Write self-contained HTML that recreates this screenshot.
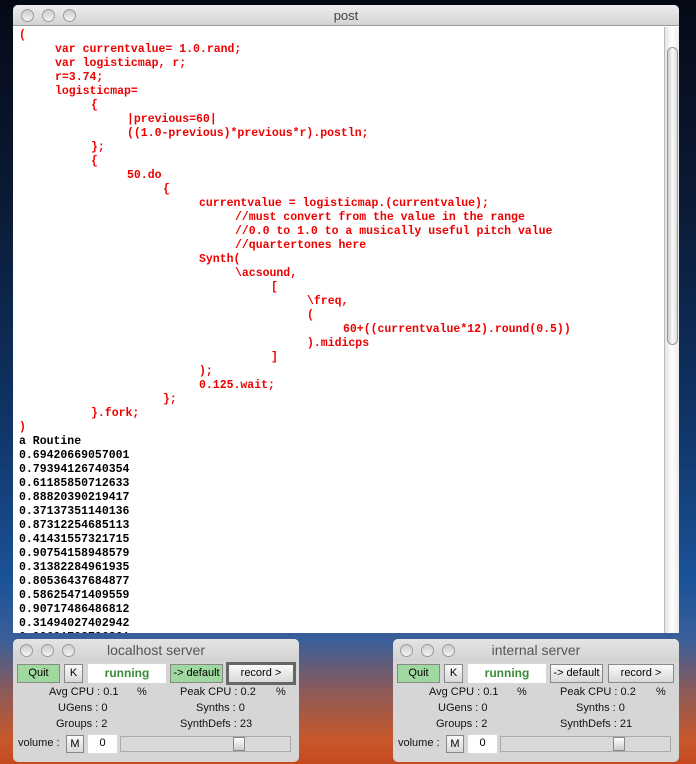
<!DOCTYPE html>
<html><head><style>
*{margin:0;padding:0;box-sizing:border-box}
body{width:696px;height:764px;overflow:hidden;position:relative;font-family:"Liberation Sans",sans-serif;
background:linear-gradient(180deg,#060a16 0px,#0b1a35 200px,#0f3466 420px,#1b5298 580px,#3a5f9a 640px,#8a5a5a 690px,#c8582a 740px,#c44a20 764px)}
.win{position:absolute;background:#fff;border-radius:5px 5px 0 0;overflow:hidden}
.tb{position:absolute;left:0;top:0;right:0;height:21px;background:linear-gradient(#eee,#d3d3d3);border-bottom:1px solid #999;text-align:center;font-size:13px;color:#444;line-height:21px}
.dot{position:absolute;top:4px;width:13px;height:13px;border-radius:50%;background:linear-gradient(#ccc,#f4f4f4);border:1px solid #9a9a9a}
.code{position:absolute;left:6px;top:24px;font-family:"Liberation Mono",monospace;font-weight:bold;font-size:11.5px;line-height:14px;color:#e00;white-space:pre;tab-size:36px;-moz-tab-size:36px}
.code div{height:14px}
.k{color:#000}
.sb{position:absolute;left:651px;top:22px;width:15px;height:606px;background:linear-gradient(90deg,#e4e4e4,#fff,#eaeaea);border-left:1px solid #bbb}
.thumb{position:absolute;left:2px;top:20px;width:11px;height:298px;border-radius:6px;background:linear-gradient(90deg,#ccc,#fafafa 50%,#ddd);border:1px solid #999}
.srv{position:absolute;top:639px;width:286px;height:123px;background:#d6d6d6;border-radius:5px;overflow:hidden;font-size:11px;color:#000}
.srv .tb{height:22px;border-bottom:none;background:linear-gradient(#e4e4e4,#d2d2d2);font-size:14px;color:#555;line-height:22px}
.b{position:absolute;height:19px;border:1px solid #888;background:linear-gradient(#fafafa,#d8d8d8);font-size:11px;text-align:center;line-height:17px}
.g{background:#9fd9a0}
.lb{position:absolute;font-size:11px;color:#111;white-space:nowrap}
</style></head><body>
<div class="win" style="left:13px;top:5px;width:666px;height:628px">
<div class="tb">post<span class="dot" style="left:8px"></span><span class="dot" style="left:29px"></span><span class="dot" style="left:50px"></span></div>
<div class="code"><div>(</div><div>	var currentvalue= 1.0.rand;</div><div>	var logisticmap, r;</div><div>	r=3.74;</div><div>	logisticmap=</div><div>		{</div><div>			|previous=60|</div><div>			((1.0-previous)*previous*r).postln;</div><div>		};</div><div>		{</div><div>			50.do</div><div>				{</div><div>					currentvalue = logisticmap.(currentvalue);</div><div>						//must convert from the value in the range</div><div>						//0.0 to 1.0 to a musically useful pitch value</div><div>						//quartertones here</div><div>					Synth(</div><div>						\acsound,</div><div>							[</div><div>								\freq,</div><div>								(</div><div>									60+((currentvalue*12).round(0.5))</div><div>								).midicps</div><div>							]</div><div>					);</div><div>					0.125.wait;</div><div>				};</div><div>		}.fork;</div><div>)</div><div class="k">a Routine</div><div class="k">0.69420669057001</div><div class="k">0.79394126740354</div><div class="k">0.61185850712633</div><div class="k">0.88820390219417</div><div class="k">0.37137351140136</div><div class="k">0.87312254685113</div><div class="k">0.41431557321715</div><div class="k">0.90754158948579</div><div class="k">0.31382284961935</div><div class="k">0.80536437684877</div><div class="k">0.58625471409559</div><div class="k">0.90717486486812</div><div class="k">0.31494027402942</div><div class="k">0.99691793796861</div></div>
<div class="sb"><div class="thumb"></div></div>
</div>

<div class="srv" style="left:13px">
<div class="tb">localhost server<span class="dot" style="left:7px;top:5px"></span><span class="dot" style="left:28px;top:5px"></span><span class="dot" style="left:49px;top:5px"></span></div>
<div class="b g" style="left:4px;top:25px;width:43px">Quit</div>
<div class="b" style="left:51px;top:25px;width:19px">K</div>
<div style="position:absolute;left:75px;top:25px;width:78px;height:19px;background:#fff;color:#3a8a3a;font-weight:bold;font-size:12px;text-align:center;line-height:19px">running</div>
<div class="b g" style="left:157px;top:25px;width:53px">-&gt; default</div>
<div class="b" style="left:213px;top:23px;width:70px;height:23px;border:3px solid #666;line-height:17px">record &gt;</div>
<div class="lb" style="left:36px;top:47px">Avg CPU : 0.1</div><div class="lb" style="left:124px;top:47px">%</div>
<div class="lb" style="left:167px;top:47px">Peak CPU : 0.2</div><div class="lb" style="left:263px;top:47px">%</div>
<div class="lb" style="left:45px;top:63px">UGens : 0</div><div class="lb" style="left:183px;top:63px">Synths : 0</div>
<div class="lb" style="left:43px;top:79px">Groups : 2</div><div class="lb" style="left:167px;top:79px">SynthDefs : 23</div>
<div class="lb" style="left:5px;top:98px">volume :</div>
<div class="b" style="left:53px;top:96px;width:18px;height:18px;line-height:16px">M</div>
<div style="position:absolute;left:75px;top:96px;width:29px;height:18px;background:#fff;text-align:center;line-height:16px">0</div>
<div style="position:absolute;left:107px;top:97px;width:171px;height:16px;border:1px solid #aaa;background:#d9d9d9"></div>
<div style="position:absolute;left:220px;top:98px;width:12px;height:14px;border:1px solid #888;background:linear-gradient(#fff,#ccc)"></div>
</div>

<div class="srv" style="left:393px">
<div class="tb">internal server<span class="dot" style="left:7px;top:5px"></span><span class="dot" style="left:28px;top:5px"></span><span class="dot" style="left:49px;top:5px"></span></div>
<div class="b g" style="left:4px;top:25px;width:43px">Quit</div>
<div class="b" style="left:51px;top:25px;width:19px">K</div>
<div style="position:absolute;left:75px;top:25px;width:78px;height:19px;background:#fff;color:#3a8a3a;font-weight:bold;font-size:12px;text-align:center;line-height:19px">running</div>
<div class="b" style="left:157px;top:25px;width:53px">-&gt; default</div>
<div class="b" style="left:215px;top:25px;width:66px">record &gt;</div>
<div class="lb" style="left:36px;top:47px">Avg CPU : 0.1</div><div class="lb" style="left:124px;top:47px">%</div>
<div class="lb" style="left:167px;top:47px">Peak CPU : 0.2</div><div class="lb" style="left:263px;top:47px">%</div>
<div class="lb" style="left:45px;top:63px">UGens : 0</div><div class="lb" style="left:183px;top:63px">Synths : 0</div>
<div class="lb" style="left:43px;top:79px">Groups : 2</div><div class="lb" style="left:167px;top:79px">SynthDefs : 21</div>
<div class="lb" style="left:5px;top:98px">volume :</div>
<div class="b" style="left:53px;top:96px;width:18px;height:18px;line-height:16px">M</div>
<div style="position:absolute;left:75px;top:96px;width:29px;height:18px;background:#fff;text-align:center;line-height:16px">0</div>
<div style="position:absolute;left:107px;top:97px;width:171px;height:16px;border:1px solid #aaa;background:#d9d9d9"></div>
<div style="position:absolute;left:220px;top:98px;width:12px;height:14px;border:1px solid #888;background:linear-gradient(#fff,#ccc)"></div>
</div>
</body></html>
